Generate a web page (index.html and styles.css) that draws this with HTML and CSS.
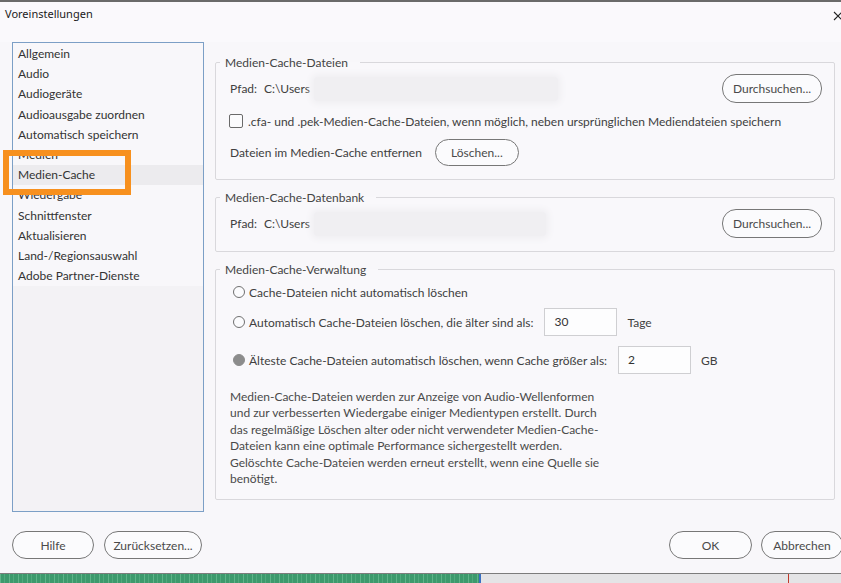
FILE: index.html
```html
<!DOCTYPE html>
<html lang="de">
<head>
<meta charset="utf-8">
<title>Voreinstellungen</title>
<link rel="stylesheet" href="styles.css">
</head>
<body>
<div class="screen">
  <div class="dialog">
    <div class="titlebar">
      <span class="title">Voreinstellungen</span>
      <svg class="close" width="8" height="10" viewBox="0 0 8 10" aria-hidden="true">
        <path d="M1 1 L9 9 M9 1 L1 9" stroke="#222" stroke-width="1.1" fill="none"/>
      </svg>
    </div>
    <div class="main">
      <div class="sidebar">
        <ul class="nav">
          <li>Allgemein</li>
          <li>Audio</li>
          <li>Audiogeräte</li>
          <li>Audioausgabe zuordnen</li>
          <li>Automatisch speichern</li>
          <li>Medien</li>
          <li class="selected">Medien-Cache</li>
          <li>Wiedergabe</li>
          <li>Schnittfenster</li>
          <li>Aktualisieren</li>
          <li>Land-/Regionsauswahl</li>
          <li>Adobe Partner-Dienste</li>
        </ul>
        <div class="nav-empty"></div>
        <div class="highlight"></div>
      </div>
      <div class="content">
        <fieldset class="group group-files">
          <legend>Medien-Cache-Dateien</legend>
          <div class="row path-row">
            <span class="label">Pfad:</span>
            <span class="path">C:\Users</span>
            <span class="redact redact-files"></span>
            <button class="btn btn-browse">Durchsuchen...</button>
          </div>
          <div class="row check-row">
            <span class="checkbox"></span>
            <span class="check-label">.cfa- und .pek-Medien-Cache-Dateien, wenn möglich, neben ursprünglichen Mediendateien speichern</span>
          </div>
          <div class="row clean-row">
            <span class="label">Dateien im Medien-Cache entfernen</span>
            <button class="btn btn-delete">Löschen...</button>
          </div>
        </fieldset>

        <fieldset class="group group-db">
          <legend>Medien-Cache-Datenbank</legend>
          <div class="row path-row">
            <span class="label">Pfad:</span>
            <span class="path">C:\Users</span>
            <span class="redact redact-db"></span>
            <button class="btn btn-browse">Durchsuchen...</button>
          </div>
        </fieldset>

        <fieldset class="group group-manage">
          <legend>Medien-Cache-Verwaltung</legend>
          <div class="row radio-row radio-first">
            <span class="radio"></span>
            <span class="radio-label">Cache-Dateien nicht automatisch löschen</span>
          </div>
          <div class="row radio-row radio-age">
            <span class="radio"></span>
            <span class="radio-label">Automatisch Cache-Dateien löschen, die älter sind als:</span>
            <span class="input">30</span>
            <span class="unit">Tage</span>
          </div>
          <div class="row radio-row radio-size">
            <span class="radio checked"></span>
            <span class="radio-label">Älteste Cache-Dateien automatisch löschen, wenn Cache größer als:</span>
            <span class="input">2</span>
            <span class="unit">GB</span>
          </div>
          <p class="desc">Medien-Cache-Dateien werden zur Anzeige von Audio-Wellenformen<br>und zur verbesserten Wiedergabe einiger Medientypen erstellt. Durch<br>das regelmäßige Löschen alter oder nicht verwendeter Medien-Cache-<br>Dateien kann eine optimale Performance sichergestellt werden.<br>Gelöschte Cache-Dateien werden erneut erstellt, wenn eine Quelle sie<br>benötigt.</p>
        </fieldset>
      </div>
    </div>
    <div class="footer">
      <div class="footer-left">
        <button class="btn btn-help">Hilfe</button>
        <button class="btn btn-reset">Zurücksetzen...</button>
      </div>
      <div class="footer-right">
        <button class="btn btn-ok">OK</button>
        <button class="btn btn-cancel">Abbrechen</button>
      </div>
    </div>
  </div>
  <div class="taskstrip">
    <div class="wave"></div>
    <div class="track"><span class="playhead"></span></div>
  </div>
</div>
</body>
</html>
```

FILE: styles.css
```css
* { box-sizing: border-box; }

html, body {
  margin: 0;
  padding: 0;
  width: 841px;
  height: 583px;
  overflow: hidden;
  background: #f8f7fa;
}

.screen {
  width: 841px;
  height: 583px;
  display: flex;
  flex-direction: column;
  font-family: Lato, "Open Sans", sans-serif;
  font-size: 12px;
  color: #3c3c3c;
}

.dialog {
  height: 573px;
  display: flex;
  flex-direction: column;
  border-top: 2px solid #6a6a6a;
  background: #f8f7fa;
}

.titlebar {
  height: 40px;
  display: flex;
  justify-content: space-between;
  align-items: flex-start;
  padding: 5px 0 0 5px;
  background: #faf9fc;
}

.title {
  font-family: "Noto Sans", "Open Sans", sans-serif;
  font-size: 11px;
  line-height: 14px;
  color: #1a1a1a;
}

.close {
  display: block;
  margin-top: 4px;
  overflow: hidden;
}

.main {
  height: 470px;
  display: flex;
  padding: 0 6px 0 12px;
  gap: 11px;
}

.sidebar {
  position: relative;
  width: 192px;
  flex: none;
  border: 1px solid #7c9fc6;
  background: #f3f2f5;
  display: flex;
  flex-direction: column;
}

.nav {
  list-style: none;
  margin: 0;
  padding: 1px 0 0 0;
  background: #f8f7fa;
}

.nav li {
  height: 20.2px;
  line-height: 20.2px;
  padding-left: 5px;
  color: #333;
  white-space: nowrap;
}

.nav li.selected {
  background: #ecebee;
}

.nav-empty { flex: 1; }

.highlight {
  position: absolute;
  left: -10px;
  top: 107px;
  width: 128px;
  height: 45px;
  border: 6px solid #f7901e;
}

.content {
  width: 620px;
  flex: none;
  padding-top: 12px;
  display: flex;
  flex-direction: column;
  gap: 9px;
}

.group {
  margin: 0;
  min-width: 0;
  border: 1px solid #d9d8dc;
  border-radius: 2px;
  padding: 0 12px 0 14px;
  background: #f9f8fb;
}

.group legend {
  margin-left: -10px;
  padding: 1px 12px 0 5px;
  line-height: 16px;
  font-size: 12px;
  color: #444;
}

.row {
  display: flex;
  align-items: center;
}

.label, .path, .check-label, .radio-label, .unit { color: #404040; white-space: nowrap; }

.path-row {
  height: 29px;
  margin-top: 3px;
}

.path { margin-left: 7px; }

.redact {
  height: 24px;
  margin-left: 4px;
  background: #f0eff2;
  box-shadow: 0 0 6px 3px #f0eff2;
  border-radius: 4px;
}

.redact-files { width: 244px; }
.redact-db { width: 232px; }

.btn {
  font-family: Lato, "Open Sans", sans-serif;
  font-size: 12px;
  color: #4a4a4a;
  background: #fbfbfd;
  border: 1px solid #777;
  border-radius: 14px;
  padding: 0;
  height: 29px;
}

.btn-browse {
  margin-left: auto;
  width: 100px;
}

.check-row {
  height: 20px;
  margin-top: 8px;
}

.checkbox {
  width: 14px;
  height: 14px;
  margin-left: -1px;
  margin-right: 5px;
  border: 1px solid #6a6a6a;
  border-radius: 2px;
  background: #fbfbfd;
}

.clean-row {
  height: 27px;
  margin-top: 8px;
  margin-bottom: 13px;
}

.btn-delete {
  width: 84px;
  height: 27px;
  margin-left: 13px;
}

.group-db .path-row { margin-bottom: 13px; }

.radio {
  width: 12px;
  height: 12px;
  flex: none;
  margin-left: 3px;
  margin-right: 4px;
  border: 1px solid #707070;
  border-radius: 50%;
  background: #fbfbfd;
}

.radio.checked {
  background: #8c8c8c;
  border-color: #8c8c8c;
}

.radio-first {
  height: 20px;
  margin-top: 4px;
}

.radio-age {
  height: 28px;
  margin-top: 6px;
}

.radio-size {
  height: 28px;
  margin-top: 10px;
}

.input {
  width: 73px;
  height: 28px;
  margin-left: 11px;
  padding-left: 9px;
  line-height: 26px;
  border: 1px solid #cfcfd2;
  background: #fdfdfe;
  color: #333;
}

.unit { margin-left: 10px; }

.desc {
  margin: 15px 0 12px 0;
  line-height: 16.4px;
  color: #4a4a4a;
  white-space: nowrap;
}

.footer {
  height: 61px;
  display: flex;
  padding: 19px 0 0 12px;
}

.footer-left, .footer-right {
  display: flex;
  gap: 10px;
}

.footer-right {
  margin-left: auto;
  gap: 9px;
  margin-right: -2px;
}

.btn-help { width: 82px; height: 28px; }
.btn-reset { width: 98px; height: 28px; }
.btn-ok { width: 83px; height: 28px; }
.btn-cancel { width: 82px; height: 28px; }

.taskstrip {
  height: 10px;
  display: flex;
  border-top: 1px solid #7c7c7c;
  box-shadow: inset 0 1px 0 #a9a9a9;
}

.wave {
  width: 481px;
  background:
    repeating-linear-gradient(90deg, rgba(160, 230, 190, 0.35) 0 1px, transparent 1px 4px, rgba(160, 230, 190, 0.2) 4px 5px, transparent 5px 9px),
    #3d9a6d;
  border-right: 2px solid #3a6fc2;
}

.track {
  flex: 1;
  position: relative;
  background: #e4e4e6;
}

.playhead {
  position: absolute;
  left: 307px;
  top: 0;
  bottom: 0;
  width: 1px;
  background: #c0392b;
}
```
